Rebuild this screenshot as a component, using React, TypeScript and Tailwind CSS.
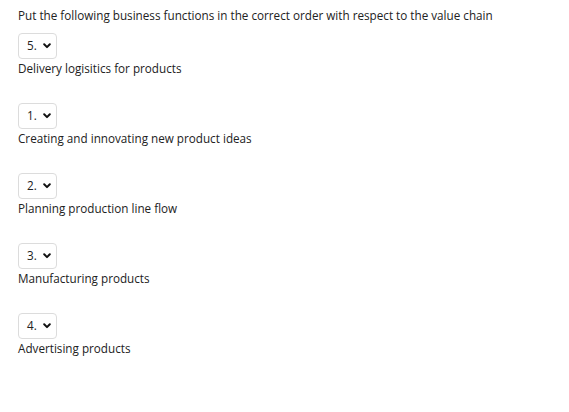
import React from "react";

const items = [
  { n: "5.", label: "Delivery logisitics for products" },
  { n: "1.", label: "Creating and innovating new product ideas" },
  { n: "2.", label: "Planning production line flow" },
  { n: "3.", label: "Manufacturing products" },
  { n: "4.", label: "Advertising products" },
];

function Chevron() {
  return (
    <svg width="8" height="6" viewBox="0 0 8 6" className="ml-[6px]">
      <path d="M1.2 1.3 L4 4.1 L6.8 1.3" fill="none" stroke="#111" strokeWidth="2" strokeLinecap="round" strokeLinejoin="round" />
    </svg>
  );
}

export default function App() {
  return (
    <div
      className="min-h-[412px] w-[569px] bg-white pl-[18px] pt-[8px] text-[11.7px] text-[#222]"
      style={{ fontFamily: '"Open Sans", sans-serif' }}
    >
      <div className="leading-[15px]">
        Put the following business functions in the correct order with respect to the value chain
      </div>
      <div className="mt-[10px] flex flex-col gap-[26px]">
        {items.map((it) => (
          <div key={it.n} className="flex flex-col items-start">
            <div className="flex h-[26px] w-[39px] items-center rounded-[4px] border border-[#dcdcdc] bg-white pl-[8px]">
              <span className="leading-none">{it.n}</span>
              <Chevron />
            </div>
            <div className="mt-[1px] leading-[17px]">{it.label}</div>
          </div>
        ))}
      </div>
    </div>
  );
}
